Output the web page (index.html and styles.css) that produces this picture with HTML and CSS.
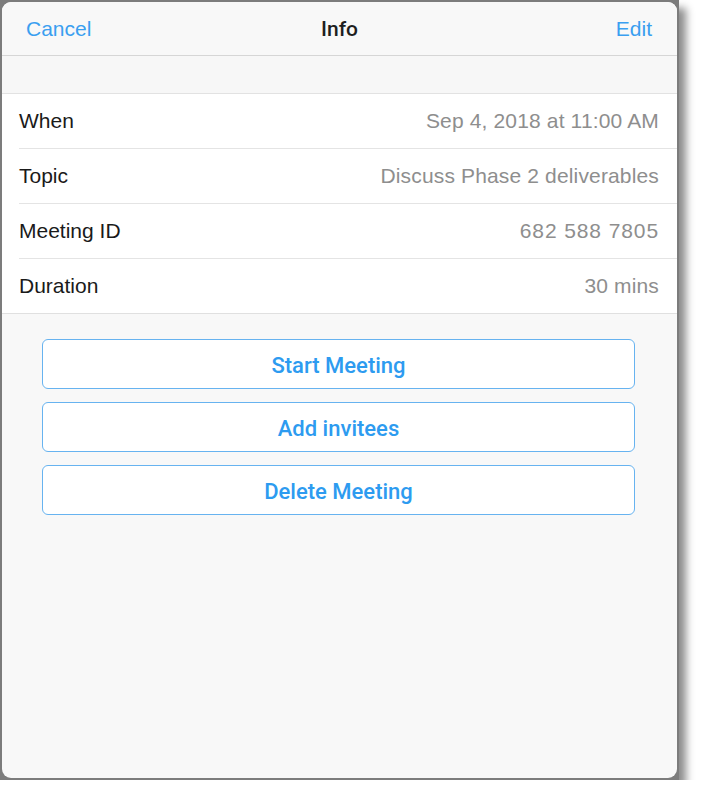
FILE: index.html
```html
<!DOCTYPE html>
<html lang="en">
<head>
<meta charset="utf-8">
<title>Info</title>
<link rel="stylesheet" href="styles.css">
</head>
<body>
<div class="frame">
  <div class="panel">
    <header class="nav">
      <span class="nav-btn">Cancel</span>
      <span class="nav-title">Info</span>
      <span class="nav-btn">Edit</span>
    </header>
    <div class="spacer"></div>
    <section class="rows">
      <div class="row"><span class="label">When</span><span class="value">Sep 4, 2018 at 11:00 AM</span></div>
      <div class="row"><span class="label">Topic</span><span class="value">Discuss Phase 2 deliverables</span></div>
      <div class="row"><span class="label">Meeting ID</span><span class="value digits">682 588 7805</span></div>
      <div class="row"><span class="label">Duration</span><span class="value">30 mins</span></div>
    </section>
    <section class="actions">
      <div class="btn">Start Meeting</div>
      <div class="btn">Add invitees</div>
      <div class="btn">Delete Meeting</div>
    </section>
  </div>
</div>
</body>
</html>
```

FILE: styles.css
```css
html, body {
  margin: 0;
  padding: 0;
  background: #ffffff;
}
body {
  font-family: "Liberation Sans", Arial, sans-serif;
  font-size: 21px;
}
.frame {
  width: 675px;
  height: 776px;
  border: 2px solid #7c7c7c;
  background: #7c7c7c;
  box-shadow: 7px 8px 8px rgba(0, 0, 0, 0.45);
}
.panel {
  height: 100%;
  background: #f8f8f8;
  border-radius: 9px;
  overflow: hidden;
  display: flex;
  flex-direction: column;
}
.nav {
  height: 53px;
  display: flex;
  align-items: center;
  justify-content: space-between;
  padding: 0 25px 0 24px;
  border-bottom: 1px solid #d6d6d6;
  background: #f8f8f8;
  position: relative;
}
.nav-btn {
  color: #3a9ff0;
}
.nav-title {
  position: absolute;
  left: 0;
  right: 0;
  text-align: center;
  color: #1e1e1e;
  font-family: Roboto, "Liberation Sans", sans-serif;
  font-weight: 500;
  font-size: 21px;
  pointer-events: none;
}
.spacer {
  height: 37px;
  background: #f7f7f7;
  border-bottom: 1px solid #e2e2e2;
}
.rows {
  background: #ffffff;
  padding-left: 17px;
  border-bottom: 1px solid #e0e0e0;
}
.row {
  height: 54px;
  display: flex;
  align-items: center;
  justify-content: space-between;
  padding-right: 18px;
  border-bottom: 1px solid #e4e4e4;
}
.row:last-child {
  border-bottom: none;
}
.label {
  color: #1a1a1a;
}
.value {
  color: #8e8e8e;
  letter-spacing: 0.15px;
}
.digits {
  letter-spacing: 0.9px;
}
.actions {
  display: flex;
  flex-direction: column;
  gap: 13px;
  padding: 25px 42px 0 40px;
}
.btn {
  box-sizing: border-box;
  height: 50px;
  padding-top: 2px;
  border: 1.5px solid #67b3f0;
  border-radius: 6px;
  background: #ffffff;
  display: flex;
  align-items: center;
  justify-content: center;
  color: #2d9bf0;
  font-family: Roboto, "Liberation Sans", sans-serif;
  font-weight: 500;
  font-size: 22px;
}
```
